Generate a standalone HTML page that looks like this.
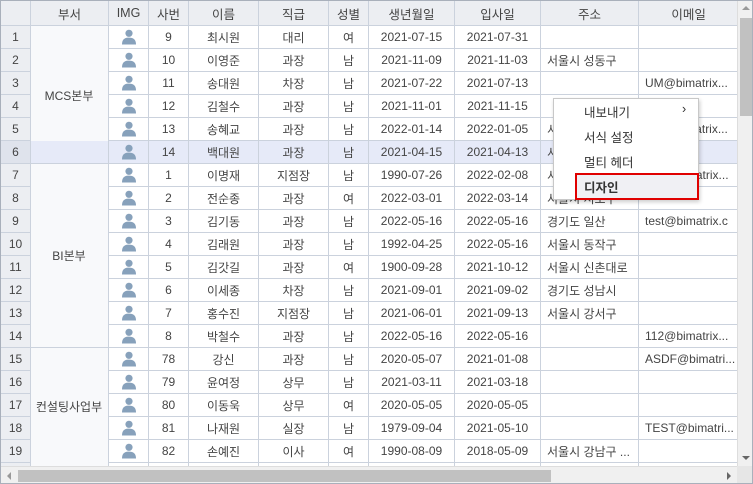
<!DOCTYPE html>
<html><head><meta charset="utf-8"><style>
*{margin:0;padding:0;box-sizing:border-box}
body{width:753px;height:484px;overflow:hidden;background:#fff;font-family:"Liberation Sans","Noto Sans CJK KR",sans-serif;font-size:12px;color:#444;position:relative}
#wrap{position:absolute;left:0;top:0;width:753px;height:484px;border:1px solid #a9b0bb;overflow:hidden}
table{position:absolute;left:-1px;top:-1px;border-collapse:collapse;table-layout:fixed}
td,th{height:23px;border:1px solid #cbd2dd;text-align:center;white-space:nowrap;overflow:hidden;font-weight:normal;padding:0 3px}
th{height:25px;background:#eceef2;color:#444;font-size:12.5px}
td.n{background:#eceef2;color:#444}
td.d{background:#f8f9fb;border-top:none;border-bottom:none}
td.d.g{border-top:1px solid #cbd2dd}
td.l{text-align:left;padding-left:6px;text-overflow:ellipsis}
tr.sel td{background:#e6eaf8}
tr.sel td.n{background:#dfe3ec}
.ico{display:block;margin:0 auto;width:16px;height:16px}
.lab{position:absolute;width:78px;left:29px;text-align:center;color:#444}
#vs{position:absolute;left:736px;top:0;width:16px;height:465px;background:#f0f0f0;border-left:1px solid #ddd}
#vt{position:absolute;left:2px;top:17px;width:12px;height:98px;background:#c1c1c1}
#hs{position:absolute;left:0;top:465px;width:736px;height:18px;background:#f0f0f0;border-top:1px solid #ddd}
#ht{position:absolute;left:17px;top:3px;width:533px;height:12px;background:#c1c1c1}
#corner{position:absolute;left:736px;top:465px;width:16px;height:18px;background:#e6e6e6}
.ar{position:absolute;width:0;height:0}
#menu{position:absolute;left:552px;top:97px;width:146px;height:102px;background:#fff;border:1px solid #c8c8c8;box-shadow:1px 2px 4px rgba(0,0,0,.2)}
.mi{position:absolute;left:30px;font-size:12.5px;color:#333}
#sel{position:absolute;left:21px;top:74px;width:124px;height:27px;border:2px solid #e00000;background:#f0f0f4}
</style></head><body><div id="wrap">
<svg width="0" height="0" style="position:absolute"><defs><symbol id="p" viewBox="0 0 16 16"><circle cx="8" cy="4.3" r="3.6" fill="#87a1bb"/><path d="M1 15.5 C1 10.5 3.5 8.6 8 8.6 C12.5 8.6 15 10.5 15 15.5 Z" fill="#87a1bb"/></symbol></defs></svg>
<table>
<colgroup><col style="width:30px"><col style="width:78px"><col style="width:40px"><col style="width:40px"><col style="width:70px"><col style="width:70px"><col style="width:40px"><col style="width:86px"><col style="width:86px"><col style="width:98px"><col style="width:100px"></colgroup>
<tr><th></th><th>부서</th><th>IMG</th><th>사번</th><th>이름</th><th>직급</th><th>성별</th><th>생년월일</th><th>입사일</th><th>주소</th><th>이메일</th></tr>
<tr><td class="n">1</td><td class="d g"></td><td><svg class="ico"><use href="#p"/></svg></td><td>9</td><td>최시원</td><td>대리</td><td>여</td><td>2021-07-15</td><td>2021-07-31</td><td class="l"></td><td class="l"></td></tr>
<tr><td class="n">2</td><td class="d"></td><td><svg class="ico"><use href="#p"/></svg></td><td>10</td><td>이영준</td><td>과장</td><td>남</td><td>2021-11-09</td><td>2021-11-03</td><td class="l">서울시 성동구</td><td class="l"></td></tr>
<tr><td class="n">3</td><td class="d"></td><td><svg class="ico"><use href="#p"/></svg></td><td>11</td><td>송대원</td><td>차장</td><td>남</td><td>2021-07-22</td><td>2021-07-13</td><td class="l"></td><td class="l">UM@bimatrix...</td></tr>
<tr><td class="n">4</td><td class="d"></td><td><svg class="ico"><use href="#p"/></svg></td><td>12</td><td>김철수</td><td>과장</td><td>남</td><td>2021-11-01</td><td>2021-11-15</td><td class="l"></td><td class="l"></td></tr>
<tr><td class="n">5</td><td class="d"></td><td><svg class="ico"><use href="#p"/></svg></td><td>13</td><td>송혜교</td><td>과장</td><td>남</td><td>2022-01-14</td><td>2022-01-05</td><td class="l">서울시 강남구</td><td class="l">UM@bimatrix...</td></tr>
<tr class="sel"><td class="n">6</td><td class="d"></td><td><svg class="ico"><use href="#p"/></svg></td><td>14</td><td>백대원</td><td>과장</td><td>남</td><td>2021-04-15</td><td>2021-04-13</td><td class="l">서울시 강남구</td><td class="l"></td></tr>
<tr><td class="n">7</td><td class="d g"></td><td><svg class="ico"><use href="#p"/></svg></td><td>1</td><td>이명재</td><td>지점장</td><td>남</td><td>1990-07-26</td><td>2022-02-08</td><td class="l">서울시 강남구</td><td class="l">test@bimatrix...</td></tr>
<tr><td class="n">8</td><td class="d"></td><td><svg class="ico"><use href="#p"/></svg></td><td>2</td><td>전순종</td><td>과장</td><td>여</td><td>2022-03-01</td><td>2022-03-14</td><td class="l">서울시 서초구</td><td class="l"></td></tr>
<tr><td class="n">9</td><td class="d"></td><td><svg class="ico"><use href="#p"/></svg></td><td>3</td><td>김기동</td><td>과장</td><td>남</td><td>2022-05-16</td><td>2022-05-16</td><td class="l">경기도 일산</td><td class="l">test@bimatrix.c</td></tr>
<tr><td class="n">10</td><td class="d"></td><td><svg class="ico"><use href="#p"/></svg></td><td>4</td><td>김래원</td><td>과장</td><td>남</td><td>1992-04-25</td><td>2022-05-16</td><td class="l">서울시 동작구</td><td class="l"></td></tr>
<tr><td class="n">11</td><td class="d"></td><td><svg class="ico"><use href="#p"/></svg></td><td>5</td><td>김갓길</td><td>과장</td><td>여</td><td>1900-09-28</td><td>2021-10-12</td><td class="l">서울시 신촌대로</td><td class="l"></td></tr>
<tr><td class="n">12</td><td class="d"></td><td><svg class="ico"><use href="#p"/></svg></td><td>6</td><td>이세종</td><td>차장</td><td>남</td><td>2021-09-01</td><td>2021-09-02</td><td class="l">경기도 성남시</td><td class="l"></td></tr>
<tr><td class="n">13</td><td class="d"></td><td><svg class="ico"><use href="#p"/></svg></td><td>7</td><td>홍수진</td><td>지점장</td><td>남</td><td>2021-06-01</td><td>2021-09-13</td><td class="l">서울시 강서구</td><td class="l"></td></tr>
<tr><td class="n">14</td><td class="d"></td><td><svg class="ico"><use href="#p"/></svg></td><td>8</td><td>박철수</td><td>과장</td><td>남</td><td>2022-05-16</td><td>2022-05-16</td><td class="l"></td><td class="l">112@bimatrix...</td></tr>
<tr><td class="n">15</td><td class="d g"></td><td><svg class="ico"><use href="#p"/></svg></td><td>78</td><td>강신</td><td>과장</td><td>남</td><td>2020-05-07</td><td>2021-01-08</td><td class="l"></td><td class="l">ASDF@bimatri...</td></tr>
<tr><td class="n">16</td><td class="d"></td><td><svg class="ico"><use href="#p"/></svg></td><td>79</td><td>윤여정</td><td>상무</td><td>남</td><td>2021-03-11</td><td>2021-03-18</td><td class="l"></td><td class="l"></td></tr>
<tr><td class="n">17</td><td class="d"></td><td><svg class="ico"><use href="#p"/></svg></td><td>80</td><td>이동욱</td><td>상무</td><td>여</td><td>2020-05-05</td><td>2020-05-05</td><td class="l"></td><td class="l"></td></tr>
<tr><td class="n">18</td><td class="d"></td><td><svg class="ico"><use href="#p"/></svg></td><td>81</td><td>나재원</td><td>실장</td><td>남</td><td>1979-09-04</td><td>2021-05-10</td><td class="l"></td><td class="l">TEST@bimatri...</td></tr>
<tr><td class="n">19</td><td class="d"></td><td><svg class="ico"><use href="#p"/></svg></td><td>82</td><td>손예진</td><td>이사</td><td>여</td><td>1990-08-09</td><td>2018-05-09</td><td class="l">서울시 강남구 ...</td><td class="l"></td></tr>
<tr><td class="n">20</td><td class="d"></td><td><svg class="ico"><use href="#p"/></svg></td><td>83</td><td></td><td></td><td></td><td></td><td></td><td class="l"></td><td class="l"></td></tr>
</table>
<div class="lab" style="top:86px">MCS본부</div>
<div class="lab" style="top:246px">BI본부</div>
<div class="lab" style="top:397px">컨설팅사업부</div>
<div id="vs"><div id="vt"></div><div class="ar" style="left:4px;top:5px;border-left:4px solid transparent;border-right:4px solid transparent;border-bottom:4px solid #999"></div><div class="ar" style="left:4px;top:455px;border-left:4px solid transparent;border-right:4px solid transparent;border-top:4px solid #666"></div></div>
<div id="hs"><div id="ht"></div><div class="ar" style="left:6px;top:5px;border-top:4px solid transparent;border-bottom:4px solid transparent;border-right:4px solid #999"></div><div class="ar" style="left:726px;top:5px;border-top:4px solid transparent;border-bottom:4px solid transparent;border-left:4px solid #666"></div></div>
<div id="corner"></div>
<div id="menu">
<div class="mi" style="top:3px">내보내기</div><div class="mi" style="top:3px;left:128px">›</div>
<div class="mi" style="top:28px">서식 설정</div>
<div class="mi" style="top:53px">멀티 헤더</div>
<div id="sel"></div>
<div class="mi" style="top:78px;font-weight:bold;color:#333">디자인</div>
</div>
</div></body></html>
